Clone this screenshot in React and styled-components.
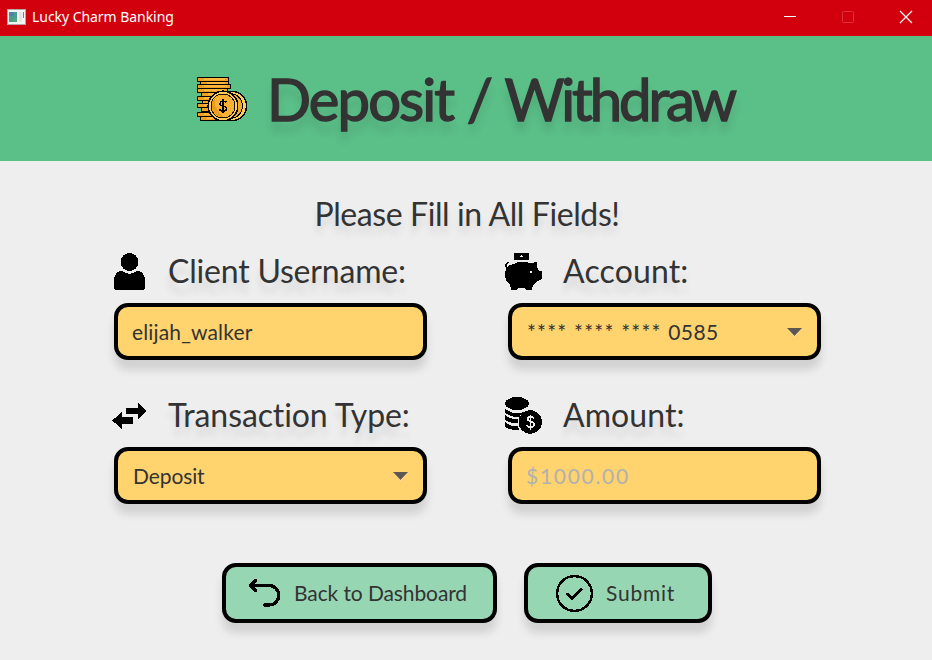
import React from "react";
import styled, { createGlobalStyle, css } from "styled-components";

const GlobalStyle = createGlobalStyle`
  *, *::before, *::after { box-sizing: border-box; }
  body { margin: 0; background: #eeeeee; }
`;

const Window = styled.div`
  display: flex;
  flex-direction: column;
  width: 932px;
  height: 660px;
  overflow: hidden;
  background: #eeeeee;
  color: #333333;
  font-family: Lato, "Open Sans", sans-serif;
`;

const TitleBar = styled.header`
  display: flex;
  flex: none;
  align-items: center;
  height: 36px;
  padding: 0 0 2px 7px;
  background: #d2000d;
  color: #ffffff;
`;

const WindowTitle = styled.span`
  flex: 1;
  margin-left: 6px;
  font: 14px/36px "Noto Sans", "Open Sans", sans-serif;
  letter-spacing: -0.05px;
  white-space: pre;
`;

const WindowButtons = styled.div`
  display: flex;
  margin-right: -3px;
`;

const WindowButton = styled.button`
  display: flex;
  align-items: center;
  justify-content: center;
  width: 58px;
  height: 34px;
  padding: 0 1px 0 0;
  border: 0;
  background: transparent;
  color: #ffffff;
  opacity: ${(p) => (p.disabled ? 0.2 : 1)};
`;

const Banner = styled.div`
  display: flex;
  flex: none;
  align-items: center;
  height: 125px;
  padding-left: 197px;
  background: #5bbf88;
`;

const Heading = styled.h1`
  margin: 0 0 0 20px;
  font-size: 58px;
  font-weight: 400;
  line-height: 125px;
  letter-spacing: -1.9px;
  word-spacing: 0.5px;
  white-space: pre;
  -webkit-text-stroke: 1.4px #333333;
  text-shadow: 0 10px 8px rgba(0, 0, 0, 0.12);
`;

const HeadingTail = styled.span`
  letter-spacing: -3.1px;
`;

const Prompt = styled.p`
  margin: 33px 0 0 2px;
  font-size: 32px;
  line-height: 40px;
  letter-spacing: -0.4px;
  text-align: center;
  white-space: pre;
  text-shadow: 0 8px 7px rgba(0, 0, 0, 0.1);
`;

const Form = styled.form`
  display: flex;
  flex-direction: column;
`;

const FieldGrid = styled.div`
  display: grid;
  grid-template-columns: 313px 313px;
  column-gap: 81px;
  row-gap: 37px;
  margin: 19px 0 0 114px;
`;

const Field = styled.div`
  display: flex;
  flex-direction: column;
`;

const LabelRow = styled.label`
  display: flex;
  align-items: center;
  height: 50px;
  padding-bottom: 13px;
  margin-left: ${(p) => p.$shift}px;
  font-size: 32px;
  line-height: 35px;
`;

const LabelText = styled.span`
  padding-bottom: 2px;
  margin-left: ${(p) => p.$gap}px;
  letter-spacing: ${(p) => p.$track}px;
  white-space: pre;
  text-shadow: 0 10px 7px rgba(0, 0, 0, 0.1);
`;

const raised = css`
  border: 4px solid #000000;
  border-radius: 14px;
  box-shadow: 0 10px 9px rgba(0, 0, 0, 0.12);
`;

const Control = styled.div`
  ${raised}
  display: flex;
  align-items: center;
  justify-content: space-between;
  height: 57px;
  padding: 0 15px 0 ${(p) => p.$inset}px;
  background: #ffd36e;
  font-size: 21px;
  line-height: 49px;
  white-space: pre;
`;

const Value = styled.span`
  letter-spacing: ${(p) => p.$track || 0}px;
  color: ${(p) => (p.$muted ? "#b1b1b1" : "#333333")};
`;

const Stars = styled.span`
  letter-spacing: 1.2px;
`;

const Actions = styled.div`
  display: flex;
  gap: 27px;
  margin: 59px 0 0 222px;
`;

const ActionButton = styled.button`
  ${raised}
  display: flex;
  align-items: center;
  width: ${(p) => p.$width}px;
  height: 60px;
  padding: 0 0 0 ${(p) => p.$inset}px;
  background: #97d6b3;
  color: #333333;
  font: 21px/50px Lato, "Open Sans", sans-serif;
  letter-spacing: ${(p) => p.$track}px;
  white-space: pre;
`;

const ButtonText = styled.span`
  margin-left: ${(p) => p.$gap}px;
`;

const Icon = styled.svg`
  display: block;
  flex: none;
  overflow: visible;
`;

const ArrowIcon = styled(Icon)`
  margin-top: 2px;
`;

function AppIcon() {
  return (
    <Icon width="19" height="16" viewBox="0 0 19 16" shapeRendering="crispEdges">
      <rect x="0.5" y="0.5" width="18" height="15" fill="#f4f4f4" stroke="#b5a5a8" />
      <rect x="2" y="3" width="8" height="10" fill="#4b9b94" />
      <path d="M2 3h5v4H2z" fill="#4d83a3" />
      <path d="M7 9h3v4H5z" fill="#55a77a" />
      <rect x="12" y="3" width="3" height="10" fill="#e4e4e4" />
      <rect x="16" y="3" width="1" height="6" fill="#5584b0" />
    </Icon>
  );
}

function CoinStackIcon() {
  const slabs = [
    [1, 1, 31], [4, 5, 28], [1, 8, 33], [1, 12, 30], [5, 16, 24],
    [1, 20, 22], [6, 24, 20], [1, 27, 20], [5, 31, 20], [1, 36, 24], [4, 40, 26],
  ];
  return (
    <Icon width="50" height="43" viewBox="0 0 50 43" shapeRendering="crispEdges">
      {slabs.map(([x, y, w]) => (
        <g key={y}>
          <rect x={x - 0.5} y={y - 0.5} width={w} height="4" fill="#eda022" stroke="#000" strokeWidth="1.3" />
          <rect x={x + 6} y={y} width={w - 10} height="2" fill="#ffb83d" />
        </g>
      ))}
      <circle cx="35" cy="29" r="14.500" fill="#ffce5a" stroke="#000" strokeWidth="1.500" />
      <circle cx="33" cy="29" r="12.500" fill="#f2aa2c" stroke="#000" strokeWidth="1" />
      <circle cx="26" cy="29" r="14.800" fill="#ffce5a" stroke="#000" strokeWidth="1.500" />
      <circle cx="26" cy="29" r="12" fill="#f9b233" stroke="#1c1204" strokeWidth="1" />
      <path d="M18 37A11 11 0 0 1 18 21c-1 7 1 12 8 19-3 0-6-1-8-3z" fill="#e99b22" />
      <path d="M29.500 25.500c-1-2-6-2-6.500 1s6.500 2 6.500 5-5.500 3.500-7 1M26 22v14" fill="none" stroke="#000" strokeWidth="1.500" />
    </Icon>
  );
}

function UserIcon() {
  return (
    <Icon width="31" height="37" viewBox="0 0 31 37" shapeRendering="crispEdges">
      <circle cx="15.500" cy="9" r="9" />
      <path d="M5.500 18h2.500c4 3.700 11 3.700 15 0h2.500c3.500 2 5.500 5 5.500 9v7q0 3-3 3H3q-3 0-3-3v-7c0-4 2-7 5.500-9z" />
    </Icon>
  );
}

function PiggyIcon() {
  return (
    <Icon width="37" height="37" viewBox="0 0 37 37" shapeRendering="crispEdges">
      <path d="M9 0h15v7H9z" />
      <path d="M15 4h3v-1h-1v-1h-1v1h-1z" fill="#eee" />
      <path d="M11 10c4-2 10-2 13 0q1 .5 2 0l6-1v5l2 4h3v8l-4 2-5 4-1 5h-6l-1-2h-7l-1 2H6l-1-6C1 29 0 25 0 21c0-3 1-6 3-8z" />
      <path d="M3.500 15C0 14 0 9.500 3.500 10" fill="none" stroke="#000" strokeWidth="1.500" />
      <rect x="24.500" y="18" width="2" height="2" fill="#eee" />
    </Icon>
  );
}

function TransferIcon() {
  return (
    <Icon width="35" height="26" viewBox="0 0 35 26" shapeRendering="crispEdges">
      <path d="M14 5h12V0l9 8-9 8v-5H14z" />
      <path d="M21 14H10V9l-10 8.500L10 26v-5h11z" />
    </Icon>
  );
}

function CoinsIcon() {
  return (
    <Icon width="37" height="37" viewBox="0 0 37 37" shapeRendering="crispEdges">
      <ellipse cx="12" cy="6.500" rx="12" ry="6.500" />
      <path d="M0 11c3 4 8 5.500 13 5l5-.6c-2 1.500-3 3-4 5C8 20 1 18 0 15z" />
      <path d="M0 18c3 3 8 4.500 13 4.500v4C7 26 1 25 0 22z" />
      <path d="M0 25c3 3 7 4.500 13 4.500l1 3.500C7 33 1 32 0 29z" />
      <circle cx="25.300" cy="25" r="11.700" />
      <path d="M29 21.500c-1-2.500-6.500-2.500-6.500.5s6.500 2 6.500 5.500-6 3.500-7 .5M25.500 17.500v15" fill="none" stroke="#eee" strokeWidth="1.700" />
    </Icon>
  );
}

function ReturnIcon() {
  return (
    <Icon width="31" height="28" viewBox="0 0 31 28" shapeRendering="crispEdges">
      <path
        d="M6.500 1.500L1.500 6.500l5 5M1.500 6.500H20a9.600 9.600 0 0 1 0 19.500h-5"
        fill="none"
        stroke="#000"
        strokeWidth="3.200"
        strokeLinecap="round"
        strokeLinejoin="round"
      />
    </Icon>
  );
}

function CheckIcon() {
  return (
    <Icon width="37" height="37" viewBox="0 0 37 37" fill="none" stroke="#000" shapeRendering="crispEdges">
      <circle cx="18.500" cy="18.500" r="17.400" strokeWidth="2.500" />
      <path d="M10.500 18.500l5.500 5 10-10" strokeWidth="2.800" />
    </Icon>
  );
}

function Arrow() {
  return (
    <ArrowIcon width="15" height="9" viewBox="0 0 15 9">
      <path d="M1 1.500h13L7.500 9z" fill="#ffe9b5" />
      <path d="M0 0h15L7.500 8z" fill="#5c5753" />
    </ArrowIcon>
  );
}

export default function App() {
  return (
    <>
      <GlobalStyle />
      <Window>
        <TitleBar>
          <AppIcon />
          <WindowTitle>Lucky Charm Banking</WindowTitle>
          <WindowButtons>
            <WindowButton aria-label="Minimize">
              <Icon width="12" height="12" viewBox="0 0 12 12"><path d="M0 5.500h12" stroke="#fff" /></Icon>
            </WindowButton>
            <WindowButton aria-label="Maximize" disabled>
              <Icon width="12" height="12" viewBox="0 0 12 12"><rect x=".5" y=".5" width="11" height="11" rx="1" fill="none" stroke="#fff" /></Icon>
            </WindowButton>
            <WindowButton aria-label="Close">
              <Icon width="12" height="12" viewBox="0 0 12 12"><path d="M0 0l12 12M12 0L0 12" stroke="#fff" strokeWidth="1.200" /></Icon>
            </WindowButton>
          </WindowButtons>
        </TitleBar>
        <Banner>
          <CoinStackIcon />
          <Heading>Deposit / <HeadingTail>Withdraw</HeadingTail></Heading>
        </Banner>
        <Form>
          <Prompt>Please Fill in All Fields!</Prompt>
          <FieldGrid>
            <Field>
              <LabelRow $shift={0}>
                <UserIcon />
                <LabelText $gap={23} $track={-0.2}>Client Username:</LabelText>
              </LabelRow>
              <Control $inset={14}>
                <Value $track={0.15}>elijah_walker</Value>
              </Control>
            </Field>
            <Field>
              <LabelRow $shift={-3}>
                <PiggyIcon />
                <LabelText $gap={21} $track={0.15}>Account:</LabelText>
              </LabelRow>
              <Control $inset={15}>
                <Value $track={0.4}><Stars>**** **** **** </Stars>0585</Value>
                <Arrow />
              </Control>
            </Field>
            <Field>
              <LabelRow $shift={-2}>
                <TransferIcon />
                <LabelText $gap={21} $track={-0.1}>Transaction Type:</LabelText>
              </LabelRow>
              <Control $inset={15}>
                <Value $track={-0.1}>Deposit</Value>
                <Arrow />
              </Control>
            </Field>
            <Field>
              <LabelRow $shift={-3}>
                <CoinsIcon />
                <LabelText $gap={21} $track={0.1}>Amount:</LabelText>
              </LabelRow>
              <Control $inset={14}>
                <Value $muted $track={1.7}>$1000.00</Value>
              </Control>
            </Field>
          </FieldGrid>
          <Actions>
            <ActionButton type="button" $width={275} $inset={23} $track={-0.1}>
              <ReturnIcon />
              <ButtonText $gap={14}>Back to Dashboard</ButtonText>
            </ActionButton>
            <ActionButton type="button" $width={188} $inset={28} $track={0.75}>
              <CheckIcon />
              <ButtonText $gap={13}>Submit</ButtonText>
            </ActionButton>
          </Actions>
        </Form>
      </Window>
    </>
  );
}
